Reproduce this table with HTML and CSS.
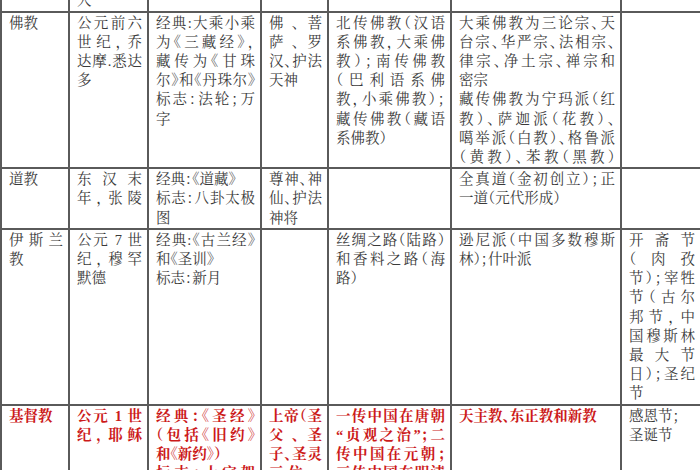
FILE: index.html
```html
<!DOCTYPE html>
<html lang="zh-CN">
<head>
<meta charset="utf-8">
<title>世界三大宗教比较</title>
<link rel="stylesheet" href="styles.css">
</head>
<body>
<table class="sheet">
  <colgroup>
    <col class="c-name">
    <col class="c-time">
    <col class="c-book">
    <col class="c-god">
    <col class="c-route">
    <col class="c-sect">
    <col class="c-fest">
  </colgroup>
  <tr class="head">
    <td><span class="rest">宗教</span></td>
    <td>创立时<br>间、创始<br>人</td>
    <td><span class="rest">经典和标志</span></td>
    <td><span class="rest">崇拜对象</span></td>
    <td><span class="rest">传播路线</span></td>
    <td><span class="rest">主要派别</span></td>
    <td><span class="rest">主要节日</span></td>
  </tr>
  <tr>
    <td><span class="rest">佛教</span></td>
    <td>公元前六<br>世纪，乔<br>达摩.悉达<br>多</td>
    <td>经典:大乘小乘<br>为《三藏经》，<br>藏传为《甘珠<br>尔》和《丹珠尔》<br>标志：法轮；万<br>字</td>
    <td>佛、菩<br>萨、罗<br>汉、护法<span class="rest">天神</span></td>
    <td>北传佛教（汉语<br>系佛教，大乘佛<br>教）；南传佛教<br>（巴利语系佛<br>教，小乘佛教）；<br>藏传佛教（藏语<span class="rest">系佛教）</span></td>
    <td>大乘佛教为三论宗、天<br>台宗、华严宗、法相宗、<br>律宗、净土宗、禅宗和<span class="rest">密宗</span>藏传佛教为宁玛派（红<br>教）、萨迦派（花教）、<br>噶举派（白教）、格鲁派<br>（黄教）、苯教（黑教）</td>
    <td></td>
  </tr>
  <tr>
    <td><span class="rest">道教</span></td>
    <td>东汉末<br>年，张陵</td>
    <td><span class="rest">经典：《道藏》</span>标志：八卦太极<br>图</td>
    <td>尊神、神<br>仙、护法<span class="rest">神将</span></td>
    <td></td>
    <td>全真道（金初创立）；正<span class="rest">一道（元代形成）</span></td>
    <td></td>
  </tr>
  <tr>
    <td>伊斯兰<br>教</td>
    <td>公元 7 世<br>纪，穆罕<span class="rest">默德</span></td>
    <td>经典:《古兰经》<span class="rest">和《圣训》</span><span class="rest">标志：新月</span></td>
    <td></td>
    <td>丝绸之路（陆路）<br>和香料之路（海<span class="rest">路）</span></td>
    <td>逊尼派（中国多数穆斯<span class="rest">林）；什叶派</span></td>
    <td>开斋节<br>（肉孜<br>节）；宰牲<br>节（古尔<br>邦节，中<br>国穆斯林<br>最大节<br>日）；圣纪<br>节</td>
  </tr>
  <tr class="hl">
    <td><span class="rest">基督教</span></td>
    <td>公元 1 世<br>纪，耶稣</td>
    <td>经典：《圣经》<br>（包括《旧约》<span class="rest">和《新约》）</span>标志：十字架</td>
    <td>上帝（圣<br>父、圣<br>子、圣灵<br>三位一<span class="rest">体）</span></td>
    <td>一传中国在唐朝<br>“贞观之治”；二<br>传中国在元朝；<br>三传中国在明清<br>之际；四传中国<span class="rest">在鸦片战争后</span></td>
    <td><span class="rest">天主教、东正教和新教</span></td>
    <td class="plain"><span class="rest">感恩节；</span><span class="rest">圣诞节</span></td>
  </tr>
</table>
</body>
</html>
```
FILE: styles.css
```css
html, body {
  margin: 0;
  padding: 0;
  background: #fff;
  overflow: hidden;
}

.sheet {
  border-collapse: collapse;
  table-layout: fixed;
  width: 702px;
  margin-top: -50px;
  font-family: "Liberation Serif", "Noto Serif CJK SC", "Noto Sans CJK SC", serif;
  font-size: 14.5px;
  line-height: 19.2px;
  color: #3a3a3a;
  font-feature-settings: "halt" 1;
}

.c-name { width: 68px; }
.c-time { width: 79px; }
.c-book { width: 113px; }
.c-god { width: 67px; }
.c-route { width: 123px; }
.c-sect { width: 170px; }
.c-fest { width: 80px; }

.sheet td {
  border: 2px solid #5a5a5a;
  padding: 1px 5px 0 7px;
  vertical-align: top;
  white-space: nowrap;
  text-align: justify;
  text-align-last: justify;
}

.rest {
  display: block;
  text-align-last: auto;
}

.hl td {
  color: #cc1a1a;
  font-weight: bold;
}

.hl td.plain {
  color: #3a3a3a;
  font-weight: normal;
}
```
